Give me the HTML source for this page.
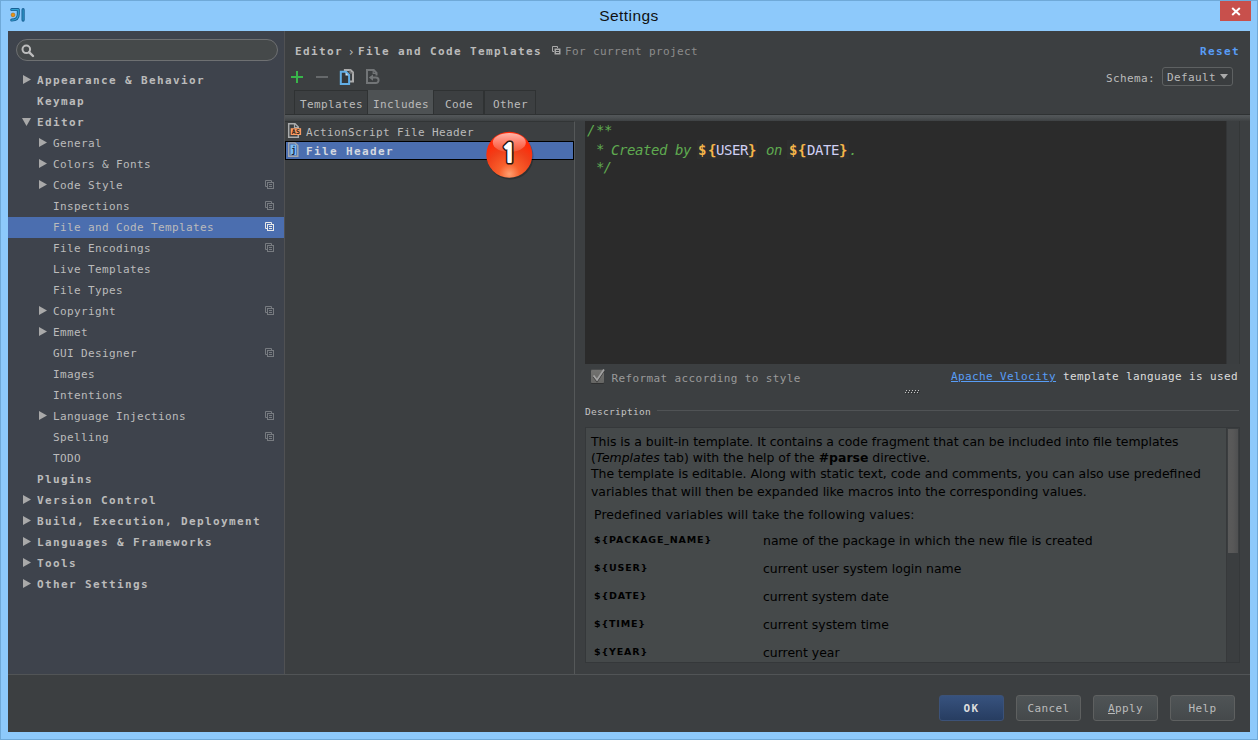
<!DOCTYPE html>
<html>
<head>
<meta charset="utf-8">
<title>Settings</title>
<style>
html,body{margin:0;padding:0;}
body{width:1258px;height:740px;overflow:hidden;position:relative;background:#8dc9fb;font-family:"DejaVu Sans Mono","Liberation Mono",monospace;font-size:12px;color:#bbbbbb;}
.abs{position:absolute;}
#win{position:absolute;left:0;top:0;width:1258px;height:740px;background:#8dc9fb;box-sizing:border-box;border:1px solid #6fa9d8;}
#title{position:absolute;left:0;top:6px;width:1258px;text-align:center;font-family:"Liberation Sans","DejaVu Sans",sans-serif;font-size:15.5px;letter-spacing:0.42px;color:#111;line-height:20px;}
#close{position:absolute;left:1220px;top:1px;width:31px;height:20px;background:#c8504c;}
#content{position:absolute;left:8px;top:31px;width:1242px;height:701px;background:#3c3f41;overflow:hidden;}
#left{position:absolute;left:0;top:0;width:276px;height:643px;background:#3e434c;border-right:1px solid #505153;}
#search{position:absolute;left:8px;top:8px;width:260px;height:20px;border:1px solid #6e7072;border-radius:12px;background:#45494a;box-sizing:content-box;}
.row{position:absolute;left:0;width:276px;height:21px;line-height:21px;white-space:nowrap;font-size:11px;letter-spacing:0.38px;color:#bbbbbb;}
.row.b{font-weight:bold;letter-spacing:1.38px;}
.row.sel{background:#4b6eaf;}
.row span.t{position:absolute;top:0;}
.l1 span.t{left:29px;}
.l2 span.t{left:45px;}
.arr{position:absolute;background:#a9a9a9;}
.arr.r{width:8px;height:9px;top:5px;clip-path:polygon(0 0,100% 50%,0 100%);}
.arr.d{width:9px;height:8px;top:6px;clip-path:polygon(0 0,100% 0,50% 100%);}
.l1 .arr.r{left:15px;}
.l1 .arr.d{left:14px;}
.l2 .arr.r{left:31px;}
.pi{position:absolute;left:257px;top:5px;width:10px;height:10px;}
#bottomline{position:absolute;left:0;top:643px;width:1242px;height:1px;background:#515456;}
.btn{position:absolute;top:664px;height:26px;width:65px;box-sizing:border-box;border:1px solid #5e6060;border-radius:3px;background:linear-gradient(#4f5456,#45494b);text-align:center;line-height:25px;font-size:11px;letter-spacing:0.38px;color:#bbbbbb;}
.btn.ok{background:linear-gradient(#37527e,#273d61);border-color:#3c5278;font-weight:bold;color:#dddddd;letter-spacing:1.38px;}

#R{position:absolute;left:-8px;top:-31px;width:1258px;height:740px;}
.t{position:absolute;white-space:nowrap;line-height:21px;font-size:11px;}
.t.b{font-weight:bold;letter-spacing:1.38px;}
.t.n{letter-spacing:0.38px;}
.tab{position:absolute;top:90px;height:24px;box-sizing:border-box;border:1px solid #2f3233;border-bottom:none;margin-left:0;background:#3c3f41;text-align:center;line-height:27px;font-size:11px;letter-spacing:0.38px;color:#bbbbbb;white-space:nowrap;padding-left:1px;}
.tab.on{background:#4e5254;border-color:#4e5254;}
.code{position:absolute;white-space:nowrap;font-family:"DejaVu Sans Mono","Liberation Mono",monospace;font-size:14px;letter-spacing:-0.43px;line-height:19px;font-style:italic;color:#5faa50;}
.code.v{font-style:normal;font-weight:bold;color:#f5b54a;}
.code.u{font-style:normal;color:#d0d0f5;}
#desc{position:absolute;left:585px;top:427px;width:655px;height:236px;background:#45494a;border:1px solid #35383a;box-sizing:border-box;overflow:hidden;}
#dtxt{position:absolute;left:0;top:0;width:640px;height:235px;font-family:"DejaVu Sans","Liberation Sans",sans-serif;font-size:12.45px;color:#000;}
.dl{position:absolute;left:5px;white-space:nowrap;line-height:16px;}
.dv{position:absolute;left:8px;white-space:nowrap;line-height:14px;font-size:9.5px;font-weight:bold;letter-spacing:0.83px;margin-top:-1px;}
</style>
</head>
<body>
<div id="win">
</div>
<div id="title">Settings</div>
<div id="close"><svg width="31" height="20" viewBox="0 0 31 20"><path d="M12.200 7 L19.800 14 M19.800 7 L12.200 14" stroke="#fff" stroke-width="2" fill="none"/></svg></div>
<svg class="abs" style="left:10px;top:7px" width="16" height="16" viewBox="0 0 16 16"><path d="M1.7 2.6 H8.3 V7 Q8.3 13.1 1.7 13.1" stroke="#175f94" stroke-width="3" fill="none" stroke-linecap="round" stroke-linejoin="round"/><path d="M1.7 2.6 H8.3 V7 Q8.3 13.1 1.7 13.1" stroke="#33a3d3" stroke-width="1.1" fill="none" stroke-linecap="round" stroke-linejoin="round"/><path d="M13.1 2.7 V13.1" stroke="#175f94" stroke-width="3.2" stroke-linecap="round"/><path d="M13.1 2.7 V13.1" stroke="#2f9ccc" stroke-width="1.1" stroke-linecap="round"/><circle cx="3" cy="7.9" r="1.9" fill="#ec940e" stroke="#a9640c" stroke-width="0.6"/></svg>
<div id="content">
<div id="left">
<div id="search"><svg class="abs" style="left:3px;top:3px" width="16" height="16" viewBox="0 0 16 16"><circle cx="6.300" cy="6.300" r="3.800" stroke="#bdbdbd" stroke-width="2" fill="none"/><path d="M9.300 9.300 L13 13" stroke="#bdbdbd" stroke-width="2.400" stroke-linecap="round"/></svg></div>
<!--TREE-->
<div class="row l1 b" style="top:39px"><i class="arr r"></i><span class="t">Appearance &amp; Behavior</span></div>
<div class="row l1 b" style="top:60px"><span class="t">Keymap</span></div>
<div class="row l1 b" style="top:81px"><i class="arr d"></i><span class="t">Editor</span></div>
<div class="row l2" style="top:102px"><i class="arr r"></i><span class="t">General</span></div>
<div class="row l2" style="top:123px"><i class="arr r"></i><span class="t">Colors &amp; Fonts</span></div>
<div class="row l2" style="top:144px"><i class="arr r"></i><span class="t">Code Style</span><svg class="pi" viewBox="0 0 10 10"><path d="M0.5 0.5 H6.5 V2.5 M0.5 0.5 V6.5 H2.5" stroke="#777b80" fill="none"/><rect x="2.5" y="2.5" width="6" height="6" stroke="#777b80" fill="none"/><path d="M4 4.5 H7 M4 6.5 H7" stroke="#777b80" fill="none"/></svg></div>
<div class="row l2" style="top:165px"><span class="t">Inspections</span><svg class="pi" viewBox="0 0 10 10"><path d="M0.5 0.5 H6.5 V2.5 M0.5 0.5 V6.5 H2.5" stroke="#777b80" fill="none"/><rect x="2.5" y="2.5" width="6" height="6" stroke="#777b80" fill="none"/><path d="M4 4.5 H7 M4 6.5 H7" stroke="#777b80" fill="none"/></svg></div>
<div class="row l2 sel" style="top:186px"><span class="t">File and Code Templates</span><svg class="pi" viewBox="0 0 10 10"><path d="M0.5 0.5 H6.5 V2.5 M0.5 0.5 V6.5 H2.5" stroke="#e8e8e8" fill="none"/><rect x="2.5" y="2.5" width="6" height="6" stroke="#e8e8e8" fill="none"/><path d="M4 4.5 H7 M4 6.5 H7" stroke="#e8e8e8" fill="none"/></svg></div>
<div class="row l2" style="top:207px"><span class="t">File Encodings</span><svg class="pi" viewBox="0 0 10 10"><path d="M0.5 0.5 H6.5 V2.5 M0.5 0.5 V6.5 H2.5" stroke="#777b80" fill="none"/><rect x="2.5" y="2.5" width="6" height="6" stroke="#777b80" fill="none"/><path d="M4 4.5 H7 M4 6.5 H7" stroke="#777b80" fill="none"/></svg></div>
<div class="row l2" style="top:228px"><span class="t">Live Templates</span></div>
<div class="row l2" style="top:249px"><span class="t">File Types</span></div>
<div class="row l2" style="top:270px"><i class="arr r"></i><span class="t">Copyright</span><svg class="pi" viewBox="0 0 10 10"><path d="M0.5 0.5 H6.5 V2.5 M0.5 0.5 V6.5 H2.5" stroke="#777b80" fill="none"/><rect x="2.5" y="2.5" width="6" height="6" stroke="#777b80" fill="none"/><path d="M4 4.5 H7 M4 6.5 H7" stroke="#777b80" fill="none"/></svg></div>
<div class="row l2" style="top:291px"><i class="arr r"></i><span class="t">Emmet</span></div>
<div class="row l2" style="top:312px"><span class="t">GUI Designer</span><svg class="pi" viewBox="0 0 10 10"><path d="M0.5 0.5 H6.5 V2.5 M0.5 0.5 V6.5 H2.5" stroke="#777b80" fill="none"/><rect x="2.5" y="2.5" width="6" height="6" stroke="#777b80" fill="none"/><path d="M4 4.5 H7 M4 6.5 H7" stroke="#777b80" fill="none"/></svg></div>
<div class="row l2" style="top:333px"><span class="t">Images</span></div>
<div class="row l2" style="top:354px"><span class="t">Intentions</span></div>
<div class="row l2" style="top:375px"><i class="arr r"></i><span class="t">Language Injections</span><svg class="pi" viewBox="0 0 10 10"><path d="M0.5 0.5 H6.5 V2.5 M0.5 0.5 V6.5 H2.5" stroke="#777b80" fill="none"/><rect x="2.5" y="2.5" width="6" height="6" stroke="#777b80" fill="none"/><path d="M4 4.5 H7 M4 6.5 H7" stroke="#777b80" fill="none"/></svg></div>
<div class="row l2" style="top:396px"><span class="t">Spelling</span><svg class="pi" viewBox="0 0 10 10"><path d="M0.5 0.5 H6.5 V2.5 M0.5 0.5 V6.5 H2.5" stroke="#777b80" fill="none"/><rect x="2.5" y="2.5" width="6" height="6" stroke="#777b80" fill="none"/><path d="M4 4.5 H7 M4 6.5 H7" stroke="#777b80" fill="none"/></svg></div>
<div class="row l2" style="top:417px"><span class="t">TODO</span></div>
<div class="row l1 b" style="top:438px"><span class="t">Plugins</span></div>
<div class="row l1 b" style="top:459px"><i class="arr r"></i><span class="t">Version Control</span></div>
<div class="row l1 b" style="top:480px"><i class="arr r"></i><span class="t">Build, Execution, Deployment</span></div>
<div class="row l1 b" style="top:501px"><i class="arr r"></i><span class="t">Languages &amp; Frameworks</span></div>
<div class="row l1 b" style="top:522px"><i class="arr r"></i><span class="t">Tools</span></div>
<div class="row l1 b" style="top:543px"><i class="arr r"></i><span class="t">Other Settings</span></div>
<!--/TREE-->
</div>
<!--RIGHT-->
<div id="R">
<!-- breadcrumb -->
<div class="t b" style="left:295px;top:41px;">Editor</div>
<div class="t" style="left:347.500px;top:42px;font-size:12px;color:#bbbbbb;letter-spacing:0">›</div>
<div class="t b" style="left:358px;top:41px;">File and Code Templates</div>
<svg class="abs" style="left:552px;top:46px" width="9" height="9" viewBox="0 0 9 9"><path d="M0.5 0.5 H5.5 V2 M0.5 0.5 V5.5 H2" stroke="#a9a9a9" fill="none"/><rect x="2.5" y="2.5" width="6" height="6" fill="#a9a9a9"/><path d="M4 4.5 H7 M4 6.5 H7" stroke="#3c3f41" fill="none"/></svg>
<div class="t n" style="left:565px;top:41px;color:#8c8c8c">For current project</div>
<div class="t b" style="left:1200px;top:41px;color:#589df6">Reset</div>
<!-- toolbar -->
<svg class="abs" style="left:290px;top:70px" width="14" height="14" viewBox="0 0 14 14"><path d="M7 1 V13 M1 7 H13" stroke="#39b54a" stroke-width="2" fill="none"/></svg>
<div class="abs" style="left:316px;top:76px;width:12px;height:2px;background:#66696b"></div>
<svg class="abs" style="left:339px;top:68px" width="16" height="18" viewBox="0 0 16 18"><path d="M5.900 3.500 V2 H11.500 L14 4.500 V13.600 H11" stroke="#adadad" stroke-width="2" fill="none"/><path d="M11 1.500 V5 H14.500" stroke="#8a8a8a" stroke-width="1" fill="none"/><path d="M1.800 3.800 H7 L10.100 7 V16.100 H1.800 Z" stroke="#62aee6" stroke-width="2" fill="#34373a"/><path d="M6.500 4.300 V7.500 H9.600 Z" fill="#c9e2f5"/></svg>
<svg class="abs" style="left:365px;top:68px" width="16" height="18" viewBox="0 0 16 18"><path d="M5 15.100 H2 V1.900 H8.700 L11.500 5 V7.500" stroke="#727577" stroke-width="2" fill="none"/><path d="M8.200 1.900 V5.300 H11.500" stroke="#727577" stroke-width="1.200" fill="none"/><path d="M7 9.600 H10.800 A2.750 2.750 0 0 1 10.800 15.100 H4.500" stroke="#727577" stroke-width="2" fill="none"/><path d="M3.800 9.600 L8 6.400 V12.800 Z" fill="#727577"/></svg>
<!-- schema -->
<div class="t n" style="left:1106px;top:68px;">Schema:</div>
<div class="abs" style="left:1162px;top:67px;width:71px;height:19px;box-sizing:border-box;border:1px solid #5e6162;border-radius:3px;background:#3a3d3f"></div>
<div class="t n" style="left:1167px;top:67px;">Default</div>
<div class="abs" style="left:1220px;top:74px;width:0;height:0;border-top:5px solid #aaaaaa;border-left:4.5px solid transparent;border-right:4.5px solid transparent"></div>
<!-- tabs -->
<div class="abs" style="left:285px;top:114px;width:965px;height:1px;background:#2f3233"></div>
<div class="abs" style="left:285px;top:115px;width:965px;height:6px;background:linear-gradient(#53575a,#4c5052 45%,#3e4143)"></div>
<div class="tab" style="left:294px;width:74px;">Templates</div>
<div class="tab on" style="left:368px;width:65px;">Includes</div>
<div class="tab" style="left:433px;width:51px;">Code</div>
<div class="tab" style="left:484px;width:52px;">Other</div>
<!-- list -->
<div class="abs" style="left:285px;top:121px;width:290px;height:553px;background:#3c3f41;border-top:1px solid #323536;border-right:1px solid #555859;box-sizing:border-box"></div>
<div class="abs" style="left:285px;top:141px;width:289px;height:19px;background:#4b6eaf;border:1px solid #000;box-sizing:border-box"></div>
<!-- AS icon -->
<svg class="abs" style="left:287px;top:122px" width="16" height="18" viewBox="0 0 16 18"><path d="M1.700 1.800 H8 L11.300 5 V15.300 H1.700 Z" stroke="#a9abac" stroke-width="1.500" fill="#3c3f41"/><path d="M7.500 1.800 V5.500 H11.300" stroke="#a9abac" stroke-width="1.200" fill="none"/><rect x="3.700" y="6.200" width="10.400" height="6.800" fill="#f79a62"/><text x="4.800" y="11.900" style="font-family:'DejaVu Sans Mono','Liberation Mono',monospace;font-size:6.500px;font-weight:bold;letter-spacing:0.300px" fill="#2a1c16">AS</text></svg>
<div class="t n" style="left:306px;top:122px;">ActionScript File Header</div>
<svg class="abs" style="left:287px;top:141px" width="16" height="18" viewBox="0 0 16 18"><path d="M1.700 1.900 H8 L10.800 4.500 V15.200 H1.700 Z" stroke="#a3a7ab" stroke-width="1.400" fill="#4b6eaf"/><rect x="3.500" y="3.600" width="5.700" height="10.400" fill="#79bbf2"/><text x="4.300" y="11.600" style="font-family:'DejaVu Sans Mono','Liberation Mono',monospace;font-size:8px;font-weight:bold" fill="#16233a">j</text></svg>
<div class="t b" style="left:306px;top:141px;color:#d5d9e0">File Header</div>
<!-- editor -->
<div class="abs" style="left:585px;top:121px;width:655px;height:243px;background:#2b2b2b"></div>
<div class="abs" style="left:1226px;top:121px;width:14px;height:243px;background:#3b3e40;box-sizing:border-box;border-right:1px solid #343738;border-left:1px solid #333537"></div>
<div class="abs" style="left:697px;top:140px;width:60px;height:19px;background:#2d2e2f"></div>
<div class="abs" style="left:787px;top:140px;width:62px;height:19px;background:#2d2e2f"></div>
<div class="code" style="left:587px;top:121px;">/</div><div class="code" style="left:596px;top:121px;">**</div>
<div class="code" style="left:596px;top:140px;">*</div><div class="code" style="left:611px;top:141px;">Created by</div>
<div class="code v" style="left:698px;top:141px;">$</div>
<div class="code v" style="left:708px;top:141px;">{</div>
<div class="code u" style="left:716px;top:141px;">USER</div>
<div class="code v" style="left:748px;top:141px;">}</div>
<div class="code" style="left:766px;top:141px;">on</div>
<div class="code v" style="left:789px;top:141px;">$</div>
<div class="code v" style="left:798px;top:141px;">{</div>
<div class="code u" style="left:807px;top:141px;">DATE</div>
<div class="code v" style="left:839px;top:141px;">}</div>
<div class="code" style="left:849px;top:141px;">.</div>
<div class="code" style="left:596px;top:158px;">*</div><div class="code" style="left:603.500px;top:158px;">/</div>
<!-- checkbox row -->
<div class="abs" style="left:591px;top:370px;width:13px;height:13px;background:linear-gradient(#727270,#666664);border-radius:1px;box-shadow:0 1px 0 #2f3031,0 -1px 0 #4a4c4d"></div>
<svg class="abs" style="left:590px;top:366px" width="18" height="18" viewBox="0 0 18 18"><path d="M3.500 10.500 L7 15 L14 4.500" stroke="#3a3a3a" stroke-width="2" fill="none"/><path d="M3.500 9.500 L7 14 L14 3.500" stroke="#a2a2a2" stroke-width="1.800" fill="none"/></svg>
<div class="t n" style="left:611.600px;top:368px;color:#9a9a9a">Reformat according to style</div>
<div class="t n" style="left:951px;top:366px;color:#589df6;text-decoration:underline">Apache Velocity</div>
<div class="t n" style="left:1063px;top:366px;color:#dddddd">template language is used</div>
<svg class="abs" style="left:905px;top:389px" width="16" height="6" viewBox="0 0 16 6" shape-rendering="crispEdges"><rect x="2" y="2" width="1" height="1" fill="#2b2d2e"/><rect x="1" y="4" width="1" height="1" fill="#2b2d2e"/><rect x="5" y="2" width="1" height="1" fill="#2b2d2e"/><rect x="4" y="4" width="1" height="1" fill="#2b2d2e"/><rect x="8" y="2" width="1" height="1" fill="#2b2d2e"/><rect x="7" y="4" width="1" height="1" fill="#2b2d2e"/><rect x="11" y="2" width="1" height="1" fill="#2b2d2e"/><rect x="10" y="4" width="1" height="1" fill="#2b2d2e"/><rect x="14" y="2" width="1" height="1" fill="#2b2d2e"/><rect x="13" y="4" width="1" height="1" fill="#2b2d2e"/><rect x="1" y="1" width="1" height="1" fill="#c4c4c4"/><rect x="0" y="3" width="1" height="1" fill="#c4c4c4"/><rect x="4" y="1" width="1" height="1" fill="#c4c4c4"/><rect x="3" y="3" width="1" height="1" fill="#c4c4c4"/><rect x="7" y="1" width="1" height="1" fill="#c4c4c4"/><rect x="6" y="3" width="1" height="1" fill="#c4c4c4"/><rect x="10" y="1" width="1" height="1" fill="#c4c4c4"/><rect x="9" y="3" width="1" height="1" fill="#c4c4c4"/><rect x="13" y="1" width="1" height="1" fill="#c4c4c4"/><rect x="12" y="3" width="1" height="1" fill="#c4c4c4"/></svg>
<!-- description -->
<div class="t" style="left:585px;top:401px;font-size:9.500px;letter-spacing:0.280px;color:#c4c4c4">Description</div>
<div class="abs" style="left:657px;top:410px;width:582px;height:1px;background:#505355"></div>
<div id="desc">
<div id="dtxt">
<div class="dl" style="top:6px">This is a built-in template. It contains a code fragment that can be included into file templates</div>
<div class="dl" style="top:22px">(<i>Templates</i> tab) with the help of the <b>#parse</b> directive.</div>
<div class="dl" style="top:38px">The template is editable. Along with static text, code and comments, you can also use predefined</div>
<div class="dl" style="top:56px">variables that will then be expanded like macros into the corresponding values.</div>
<div class="dl" style="top:79px;left:8px;letter-spacing:0.100px">Predefined variables will take the following values:</div>
<div class="dv" style="top:106px">${PACKAGE_NAME}</div><div class="dl" style="top:105px;left:177px">name of the package in which the new file is created</div>
<div class="dv" style="top:134px">${USER}</div><div class="dl" style="top:133px;left:177px">current user system login name</div>
<div class="dv" style="top:162px">${DATE}</div><div class="dl" style="top:161px;left:177px">current system date</div>
<div class="dv" style="top:190px">${TIME}</div><div class="dl" style="top:189px;left:177px">current system time</div>
<div class="dv" style="top:218px">${YEAR}</div><div class="dl" style="top:217px;left:177px">current year</div>
</div>
<div class="abs" style="left:640px;top:0;width:13px;height:236px;background:#3b3e40;border-left:1px solid #37393b"></div>
<div class="abs" style="left:642px;top:1px;width:10px;height:124px;background:linear-gradient(90deg,#5a5a5a,#585858 50%,#4f5051)"></div>
</div>
<!-- badge -->
<svg class="abs" style="left:484px;top:129px" width="52" height="52" viewBox="0 0 52 52">
<defs>
<radialGradient id="bg1" cx="50%" cy="92%" r="75%"><stop offset="0" stop-color="#ffa070"/><stop offset="0.3" stop-color="#f8602c"/><stop offset="0.7" stop-color="#f0401a"/><stop offset="1" stop-color="#ff2a08"/></radialGradient>
<linearGradient id="gl" x1="0" y1="0" x2="0" y2="1"><stop offset="0" stop-color="#ffffff" stop-opacity="0.65"/><stop offset="1" stop-color="#ffffff" stop-opacity="0.12"/></linearGradient>
</defs>
<circle cx="26.300" cy="27.300" r="23.200" fill="#000" opacity="0.22"/>
<circle cx="25.300" cy="25.700" r="23" fill="url(#bg1)"/>
<ellipse cx="25.300" cy="13.500" rx="16.500" ry="9.500" fill="url(#gl)"/>
<text x="25" y="33.300" text-anchor="middle" style="font-family:'NanumGothic','IPAGothic',sans-serif;font-weight:bold;font-size:24px" fill="#2b1810" stroke="#2b1810" stroke-width="5" stroke-linejoin="round">1</text>
<text x="25" y="33.300" text-anchor="middle" style="font-family:'NanumGothic','IPAGothic',sans-serif;font-weight:bold;font-size:24px" fill="#ffffff" stroke="#ffffff" stroke-width="1.800" stroke-linejoin="round">1</text>
</svg>
</div>
<!--/RIGHT-->
<div id="bottomline"></div>
<div class="btn ok" style="left:931px">OK</div>
<div class="btn" style="left:1008px">Cancel</div>
<div class="btn" style="left:1085px"><u>A</u>pply</div>
<div class="btn" style="left:1162px">Help</div>
</div>
</body>
</html>
